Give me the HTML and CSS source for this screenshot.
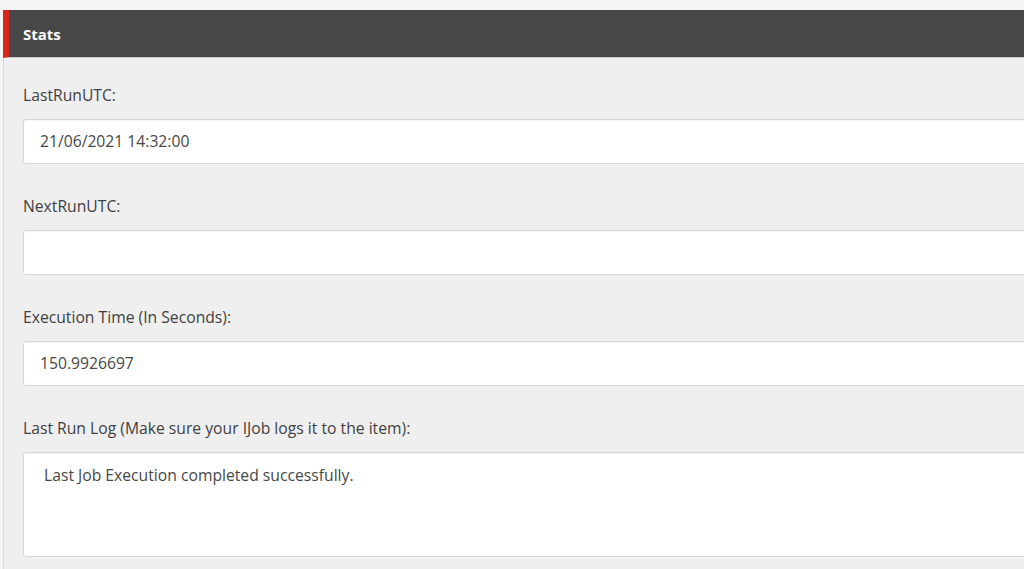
FILE: index.html
```html
<!DOCTYPE html>
<html>
<head>
<meta charset="utf-8">
<link rel="stylesheet" href="styles.css">
</head>
<body>
<div class="page">
  <section class="panel">
    <header class="panel-head">Stats</header>
    <div class="panel-body">
      <div class="field">
        <label class="field-label">LastRunUTC:</label>
        <div class="input">21/06/2021 14:32:00</div>
      </div>
      <div class="field">
        <label class="field-label">NextRunUTC:</label>
        <div class="input"></div>
      </div>
      <div class="field">
        <label class="field-label">Execution Time (In Seconds):</label>
        <div class="input">150.9926697</div>
      </div>
      <div class="field">
        <label class="field-label">Last Run Log (Make sure your IJob logs it to the item):</label>
        <div class="textarea">Last Job Execution completed successfully.</div>
      </div>
    </div>
  </section>
</div>
</body>
</html>
```
FILE: styles.css
```css
html, body {
  margin: 0;
  padding: 0;
  overflow: hidden;
}
body {
  background: #f4f4f4;
  font-family: "Open Sans", "Liberation Sans", sans-serif;
  font-size: 15.7px;
  color: #3f3f3f;
}
.page {
  padding: 10px 0 0 3px;
  height: 569px;
  box-sizing: border-box;
}
.panel {
  width: 1060px;
  height: 100%;
  display: flex;
  flex-direction: column;
}
.panel-head {
  height: 47px;
  background: #474747;
  border-left: 6px solid #d9261c;
  border-bottom: 1px solid #c9c9c9;
  color: #fff;
  font-weight: 700;
  font-size: 15px;
  line-height: 48px;
  padding-left: 14px;
}
.panel-body {
  flex: 1;
  background: #efefef;
  border-left: 1px solid #dadada;
  padding: 26px 0 0 19px;
  display: flex;
  flex-direction: column;
  gap: 31px;
}
.field {
  display: flex;
  flex-direction: column;
  gap: 13px;
}
.field-label {
  line-height: 22px;
  height: 22px;
}
.input, .textarea {
  background: #fff;
  border: 1px solid #d6d6d6;
  border-radius: 3px;
  box-shadow: inset 0 1px 1px rgba(0,0,0,0.04);
  box-sizing: border-box;
  color: #474747;
}
.input {
  height: 45px;
  line-height: 43px;
  padding-left: 16px;
}
.textarea {
  height: 105px;
  padding: 11px 0 0 20px;
  line-height: 22px;
}
```
